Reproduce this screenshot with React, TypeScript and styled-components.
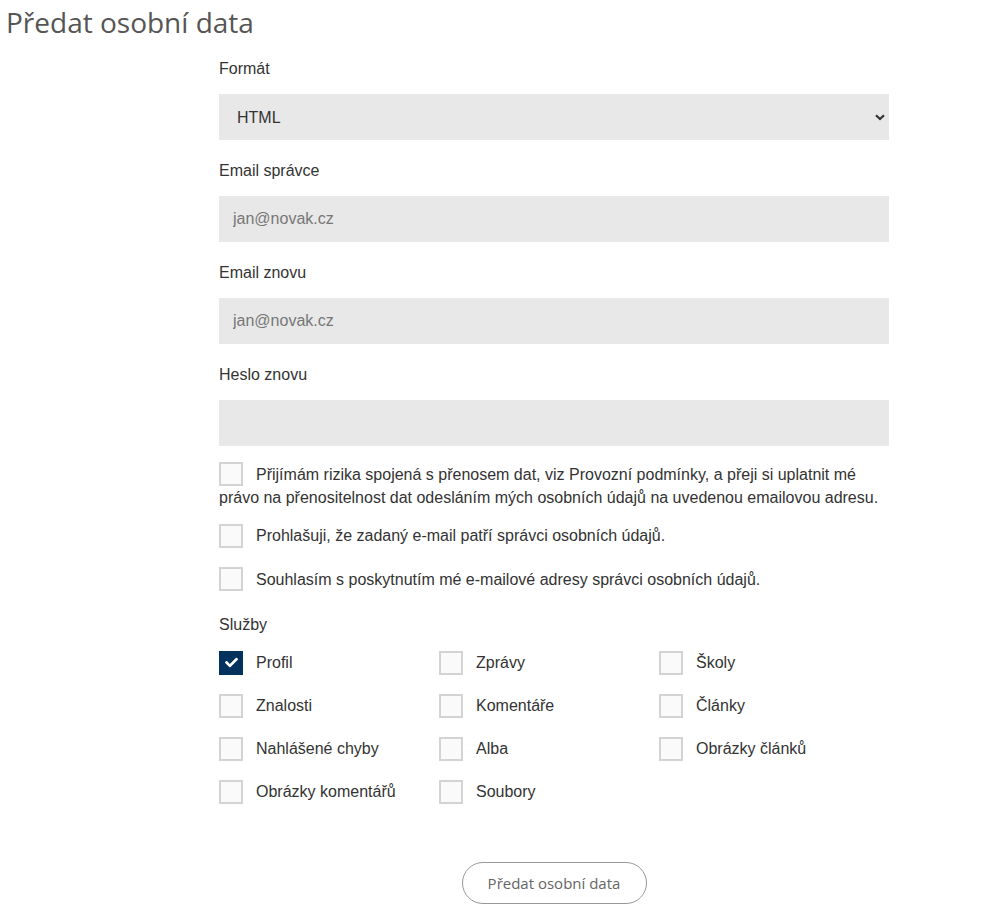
import styled, { createGlobalStyle } from "styled-components";

const Global = createGlobalStyle`
    body {
        margin: 0;
        background: #fff;
        font-family: "Liberation Sans", Arial, sans-serif;
        color: #333;
    }
`;

const Page = styled.div`
    width: 997px;
    padding: 4px 0 0 6px;
    box-sizing: border-box;
`;

const Title = styled.h1`
    margin: 0;
    font-family: "Open Sans", sans-serif;
    font-weight: 400;
    font-size: 28px;
    line-height: 36px;
    color: #555;
`;

const Form = styled.form`
    width: 670px;
    margin: 19px 0 0 213px;
    display: flex;
    flex-direction: column;
`;

const Field = styled.div`
    display: flex;
    flex-direction: column;
    margin-bottom: 21px;
`;

const Label = styled.label`
    font-size: 16px;
    line-height: 20px;
    margin-bottom: 15px;
    color: #333;
`;

const SelectWrap = styled.div`
    position: relative;
`;

const Select = styled.select`
    appearance: none;
    width: 100%;
    height: 46px;
    border: none;
    background: #e8e8e8;
    padding: 0 18px;
    font-family: "Liberation Sans", Arial, sans-serif;
    font-size: 16px;
    color: #333;
    outline: none;
`;

const Chevron = styled.svg`
    position: absolute;
    right: 4px;
    top: 20px;
    pointer-events: none;
`;

const Input = styled.input`
    height: 46px;
    border: none;
    background: #e8e8e8;
    padding: 0 14px;
    box-sizing: border-box;
    font-family: "Liberation Sans", Arial, sans-serif;
    font-size: 16px;
    color: #666;
    outline: none;
    &::placeholder {
        color: #777;
    }
`;

const Consents = styled.div`
    display: flex;
    flex-direction: column;
    gap: 20px;
    margin-top: -4px;
    padding-right: 8px;
`;

const Consent = styled.label`
    font-size: 16px;
    line-height: 23px;
    color: #333;
    &:first-child {
        margin-bottom: -5px;
    }
`;

const Box = styled.span<{ $checked?: boolean }>`
    display: inline-flex;
    align-items: center;
    justify-content: center;
    width: 24px;
    height: 24px;
    box-sizing: border-box;
    border: 2px solid ${(p) => (p.$checked ? "#04325f" : "#d3d3d3")};
    background: ${(p) => (p.$checked ? "#04325f" : "#fafafa")};
    vertical-align: middle;
    margin: -3px 13px 0 0;
`;

const ServicesTitle = styled.div`
    font-size: 16px;
    line-height: 20px;
    margin: 24px 0 16px;
`;

const Grid = styled.div`
    display: grid;
    grid-template-columns: repeat(3, 220px);
    grid-auto-rows: 43px;
`;

const Option = styled.label`
    display: flex;
    align-items: flex-start;
    font-size: 16px;
    line-height: 24px;
    color: #333;
    ${Box} {
        margin: 0 13px 0 0;
    }
`;

const Actions = styled.div`
    display: flex;
    justify-content: center;
    margin-top: 39px;
`;

const Button = styled.button`
    width: 185px;
    height: 42px;
    border: 1px solid #999;
    border-radius: 21px;
    background: #fff;
    font-family: "Open Sans", sans-serif;
    font-size: 15px;
    color: #666;
    cursor: pointer;
`;

const Check = () => (
    <svg width="13" height="13" viewBox="0 0 512 512">
        <path
            fill="#fff"
            d="M173.9 439.4l-166.4-166.4c-10-10-10-26.2 0-36.2l36.2-36.2c10-10 26.2-10 36.2 0L192 312.7 432.1 72.6c10-10 26.2-10 36.2 0l36.2 36.2c10 10 10 26.2 0 36.2l-294.4 294.4c-10 10-26.2 10-36.2 0z"
        />
    </svg>
);

const CheckBox = ({ checked }: { checked?: boolean }) => (
    <Box $checked={checked}>{checked && <Check />}</Box>
);

const services = [
    { name: "Profil", checked: true },
    { name: "Zprávy" },
    { name: "Školy" },
    { name: "Znalosti" },
    { name: "Komentáře" },
    { name: "Články" },
    { name: "Nahlášené chyby" },
    { name: "Alba" },
    { name: "Obrázky článků" },
    { name: "Obrázky komentářů" },
    { name: "Soubory" },
];

const App = () => {
    return (
        <Page>
            <Global />
            <Title>Předat osobní data</Title>
            <Form onSubmit={(e) => e.preventDefault()}>
                <Field>
                    <Label>Formát</Label>
                    <SelectWrap>
                        <Select defaultValue="html">
                            <option value="html">HTML</option>
                            <option value="json">JSON</option>
                        </Select>
                        <Chevron width="10" height="7" viewBox="0 0 10 7">
                            <path d="M1 1.2 L5 5 L9 1.2" fill="none" stroke="#333" strokeWidth="2.2" />
                        </Chevron>
                    </SelectWrap>
                </Field>
                <Field>
                    <Label>Email správce</Label>
                    <Input type="email" placeholder="jan@novak.cz" />
                </Field>
                <Field>
                    <Label>Email znovu</Label>
                    <Input type="email" placeholder="jan@novak.cz" />
                </Field>
                <Field>
                    <Label>Heslo znovu</Label>
                    <Input type="password" />
                </Field>
                <Consents>
                    <Consent>
                        <CheckBox />
                        Přijímám rizika spojená s přenosem dat, viz Provozní podmínky, a přeji si uplatnit mé
                        právo na přenositelnost dat odesláním mých osobních údajů na uvedenou emailovou adresu.
                    </Consent>
                    <Consent>
                        <CheckBox />
                        Prohlašuji, že zadaný e-mail patří správci osobních údajů.
                    </Consent>
                    <Consent>
                        <CheckBox />
                        Souhlasím s poskytnutím mé e-mailové adresy správci osobních údajů.
                    </Consent>
                </Consents>
                <ServicesTitle>Služby</ServicesTitle>
                <Grid>
                    {services.map((s) => (
                        <Option key={s.name}>
                            <CheckBox checked={s.checked} />
                            {s.name}
                        </Option>
                    ))}
                </Grid>
                <Actions>
                    <Button type="submit">Předat osobní data</Button>
                </Actions>
            </Form>
        </Page>
    );
};

export default App;
